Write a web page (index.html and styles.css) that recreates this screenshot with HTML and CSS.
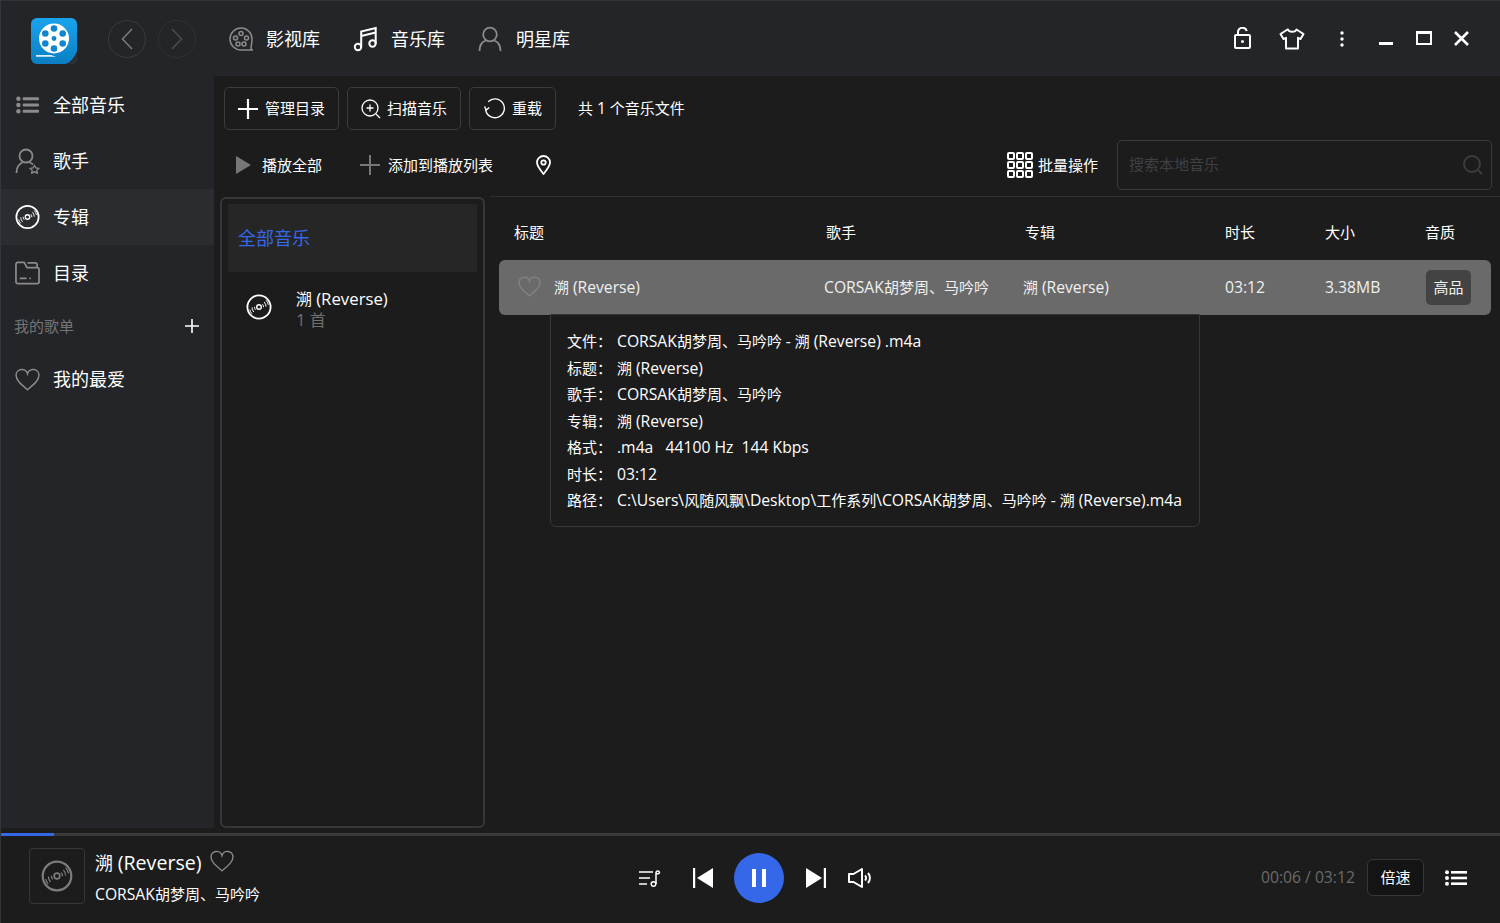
FILE: index.html
```html
<!DOCTYPE html>
<html lang="zh-CN">

<head>
    <meta charset="utf-8">
    <title>音乐库</title>
    <link rel="stylesheet" href="styles.css">
</head>

<body>
    <svg class="defs" width="0" height="0">
        <symbol id="disc" viewBox="0 0 26 26">
            <circle cx="13" cy="13" r="11.6" fill="none" stroke="currentColor" stroke-width="1.8" />
            <circle cx="13" cy="13" r="2.3" fill="none" stroke="currentColor" stroke-width="1.4" />
            <path d="M16.500 10.200a4.500 4.500 0 0 1 1 3M18.200 8a7.200 7.200 0 0 1 1.800 4.600M9.500 15.800a4.500 4.500 0 0 1-1-3M7.800 18a7.200 7.200 0 0 1-1.800-4.600M5.800 19.600a9.600 9.600 0 0 1-2-4M20 6.200a9.600 9.600 0 0 1 2.300 4.600" fill="none" stroke="currentColor" stroke-width="1" />
        </symbol>
        <symbol id="heart" viewBox="0 0 24 22">
            <path d="M12 20.800C5 15 1 11.500 1 7a5.600 5.600 0 0 1 11-1.500A5.600 5.600 0 0 1 23 7c0 4.500-4 8-11 13.800z" fill="none" stroke="currentColor" stroke-width="1.400" />
        </symbol>
    </svg>

    <div class="app">
        <header class="topbar">
            <svg class="logo" viewBox="0 0 46 46">
                <defs>
                    <linearGradient id="logoBlue" x1="0" y1="0" x2="0" y2="1">
                        <stop offset="0" stop-color="#1aa3ee" />
                        <stop offset="1" stop-color="#0a7fc2" />
                    </linearGradient>
                </defs>
                <rect width="46" height="46" rx="6" fill="url(#logoBlue)" />
                <circle cx="23" cy="20.500" r="15" fill="#fff" />
                <g fill="#0f86d2">
                    <circle cx="23" cy="20.500" r="2.400" />
                    <circle cx="23" cy="10.500" r="3.300" />
                    <circle cx="23" cy="30.500" r="3.300" />
                    <circle cx="14.300" cy="15.500" r="3.300" />
                    <circle cx="31.700" cy="15.500" r="3.300" />
                    <circle cx="14.300" cy="25.500" r="3.300" />
                    <circle cx="31.700" cy="25.500" r="3.300" />
                </g>
                <path d="M5 37h15l5 1.800H5z" fill="#dff2fc" />
                <path d="M46 33v7a6 6 0 0 1-6 6h-6c5-1 10-7 12-13z" fill="#2c2c2e" />
            </svg>
            <button class="round-btn back">
                <svg viewBox="0 0 12 22" class="chev"><path d="M11 1 1.500 11 11 21" /></svg>
            </button>
            <button class="round-btn forward">
                <svg viewBox="0 0 12 22" class="chev"><path d="M1 1l9.500 10L1 21" /></svg>
            </button>

            <nav class="top-nav">
                <a class="top-link">
                    <svg class="nav-icon" viewBox="0 0 26 26" fill="none" stroke="#8b8b8b" stroke-width="1.500">
                        <path d="M13 24a11 11 0 1 1 11-11c0 4-1 7-1 9.500 0 1 .5 1.500 2 1.500z" />
                        <circle cx="13" cy="7.500" r="2" />
                        <circle cx="7.500" cy="12" r="2" />
                        <circle cx="18.500" cy="12" r="2" />
                        <circle cx="10" cy="18" r="2" />
                        <circle cx="16" cy="18" r="2" />
                    </svg>
                    <span>影视库</span>
                </a>
                <a class="top-link">
                    <svg class="nav-icon" viewBox="0 0 26 26" fill="none" stroke="#fff" stroke-width="2">
                        <circle cx="5" cy="21" r="3.200" />
                        <circle cx="19.500" cy="17.500" r="3.200" />
                        <path d="M8.200 21V5.500L22.700 2v15.500M8.200 10l14.500-3.500" />
                    </svg>
                    <span>音乐库</span>
                </a>
                <a class="top-link star-link">
                    <svg class="nav-icon person" viewBox="0 0 24 26" fill="none" stroke="#8b8b8b" stroke-width="1.800">
                        <circle cx="12" cy="8.500" r="6.800" />
                        <path d="M1.500 25c0-6 3-9.500 6.500-10.500M22.500 25c0-6-3-9.500-6.500-10.500" />
                    </svg>
                    <span>明星库</span>
                </a>
            </nav>

            <div class="win-tools">
                <svg class="tool lock" viewBox="0 0 17 22" fill="none" stroke="#fff" stroke-width="2">
                    <rect x="1" y="8" width="15" height="13" rx="1" />
                    <path d="M4 8V5a4.500 4.500 0 0 1 8.800-1" />
                    <circle cx="8.500" cy="14.500" r="1.500" fill="#fff" stroke="none" />
                </svg>
                <svg class="tool shirt" viewBox="0 0 26 22" fill="none" stroke="#fff" stroke-width="2">
                    <path d="M8.500 1.500 1.500 6l3 5 2.500-1.200V20.500h12V9.800l2.500 1.200 3-5-7-4.500c-1 3-7.500 3-8.500 0z" stroke-linejoin="round" />
                </svg>
                <svg class="tool dots" viewBox="0 0 4 16" fill="#fff">
                    <circle cx="2" cy="2" r="1.700" />
                    <circle cx="2" cy="8" r="1.700" />
                    <circle cx="2" cy="14" r="1.700" />
                </svg>
                <span class="win-min"></span>
                <span class="win-max"></span>
                <svg class="tool close" viewBox="0 0 15 15" stroke="#fff" stroke-width="2.600">
                    <path d="M1 1l13 13M14 1 1 14" />
                </svg>
            </div>
        </header>

        <div class="main">
            <aside class="sidebar">
                <a class="side-item">
                    <svg class="side-icon list-icon" viewBox="0 0 24 18" fill="#8b8b8b">
                        <circle cx="2.500" cy="2.500" r="2.300" />
                        <circle cx="2.500" cy="9" r="2.300" />
                        <circle cx="2.500" cy="15.500" r="2.300" />
                        <rect x="7" y="1" width="17" height="3" rx="1" />
                        <rect x="7" y="7.500" width="17" height="3" rx="1" />
                        <rect x="7" y="14" width="17" height="3" rx="1" />
                    </svg>
                    <span>全部音乐</span>
                </a>
                <a class="side-item">
                    <svg class="side-icon" viewBox="0 0 24 26" fill="none" stroke="#8b8b8b" stroke-width="1.800">
                        <circle cx="10.500" cy="8" r="6.500" />
                        <path d="M1 25c0-6 2.500-9 6-10.500M14 14.500c1.500.5 2.500 1 3.500 2" />
                        <path d="M19 17.500l1.500 2.500 2.800.4-2 2 .5 2.800-2.800-1.400-2.800 1.400.5-2.800-2-2 2.800-.4z" stroke-width="1.300" />
                    </svg>
                    <span>歌手</span>
                </a>
                <a class="side-item active">
                    <svg class="side-icon disc-white"><use href="#disc" /></svg>
                    <span>专辑</span>
                </a>
                <a class="side-item">
                    <svg class="side-icon" viewBox="0 0 26 24" fill="none" stroke="#8b8b8b" stroke-width="1.800">
                        <path d="M1 3a2 2 0 0 1 2-2h6.500l3 5.500H23a2 2 0 0 1 2 2V21a2 2 0 0 1-2 2H3a2 2 0 0 1-2-2z" />
                        <path d="M13 1.500h8a2 2 0 0 1 2 2V6M5 17.500h7M15 17.500h1.500" />
                    </svg>
                    <span>目录</span>
                </a>
                <div class="side-group">
                    <span>我的歌单</span>
                    <svg class="group-add" viewBox="0 0 14 14" stroke="#fff" stroke-width="1.600"><path d="M7 0v14M0 7h14" /></svg>
                </div>
                <a class="side-item">
                    <svg class="side-icon heart-gray"><use href="#heart" /></svg>
                    <span>我的最爱</span>
                </a>
            </aside>

            <section class="content">
                <div class="actions">
                    <button class="outline-btn manage">
                        <svg class="btn-plus" viewBox="0 0 20 20" stroke="#fff" stroke-width="2.200"><path d="M10 0v20M0 10h20" /></svg>
                        <span>管理目录</span>
                    </button>
                    <button class="outline-btn scan">
                        <svg class="btn-icon" viewBox="0 0 20 20" fill="none" stroke="#fff" stroke-width="1.300">
                            <circle cx="9" cy="9" r="8" />
                            <path d="M9 5.500v7M5.500 9h7M15 15l4 4" />
                        </svg>
                        <span>扫描音乐</span>
                    </button>
                    <button class="outline-btn reload">
                        <svg class="reload-icon" viewBox="0 0 22 22" fill="none" stroke="#fff" stroke-width="1.300">
                            <path d="M5 4.500A9 9 0 1 1 2.500 12" />
                            <path d="M1.500 9 3 12.500 6 10" />
                        </svg>
                        <span>重载</span>
                    </button>
                    <span class="file-count">共 <span class="lat">1</span> 个音乐文件</span>
                </div>

                <div class="subactions">
                    <a class="sub-link play-all">
                        <svg class="sub-play" viewBox="0 0 15 18" fill="#777"><path d="M0 0l15 9-15 9z" /></svg>
                        <span>播放全部</span>
                    </a>
                    <a class="sub-link add-list">
                        <svg class="sub-plus" viewBox="0 0 20 20" stroke="#777" stroke-width="2"><path d="M10 0v20M0 10h20" /></svg>
                        <span>添加到播放列表</span>
                    </a>
                    <svg class="pin" viewBox="0 0 15 20" fill="none" stroke="#fff" stroke-width="1.800">
                        <path d="M7.500 19C3.500 14 1 11 1 7.500a6.500 6.500 0 0 1 13 0C14 11 11.500 14 7.500 19z" />
                        <circle cx="7.500" cy="7.500" r="2.200" />
                    </svg>
                    <a class="sub-link batch">
                        <svg class="batch-icon" viewBox="0 0 26 26" fill="none" stroke="#fff" stroke-width="2">
                            <rect x="1" y="1" width="6" height="6" rx="1" />
                            <rect x="10" y="1" width="6" height="6" rx="1" />
                            <rect x="19" y="1" width="6" height="6" rx="1" />
                            <rect x="1" y="10" width="6" height="6" rx="1" />
                            <rect x="10" y="10" width="6" height="6" rx="1" />
                            <rect x="19" y="10" width="6" height="6" rx="1" />
                            <rect x="1" y="19" width="6" height="6" rx="1" />
                            <rect x="10" y="19" width="6" height="6" rx="1" />
                            <rect x="19" y="19" width="6" height="6" rx="1" />
                        </svg>
                        <span>批量操作</span>
                    </a>
                    <div class="search">
                        <span>搜索本地音乐</span>
                        <svg class="search-icon" viewBox="0 0 20 20" fill="none" stroke="#3d3e42" stroke-width="1.800">
                            <circle cx="9" cy="9" r="8" />
                            <path d="M15.500 15.500 19 19" />
                        </svg>
                    </div>
                </div>

                <div class="panes">
                    <div class="album-pane">
                        <div class="album-all"><span>全部音乐</span></div>
                        <div class="album-row">
                            <svg class="album-disc"><use href="#disc" /></svg>
                            <div class="album-text">
                                <div class="album-name">溯 <span class="lat">(Reverse)</span></div>
                                <div class="album-count"><span class="lat">1</span> 首</div>
                            </div>
                        </div>
                    </div>

                    <div class="track-pane">
                        <div class="track-head">
                            <span>标题</span>
                            <span>歌手</span>
                            <span>专辑</span>
                            <span>时长</span>
                            <span>大小</span>
                            <span>音质</span>
                        </div>
                        <div class="track-row">
                            <span class="track-title">
                                <svg class="track-heart"><use href="#heart" /></svg>
                                <span>溯 <span class="lat">(Reverse)</span></span>
                            </span>
                            <span><span class="lat">CORSAK</span>胡梦周、马吟吟</span>
                            <span>溯 <span class="lat">(Reverse)</span></span>
                            <span class="lat">03:12</span>
                            <span class="lat">3.38MB</span>
                            <span class="quality">高品</span>
                        </div>

                        <dl class="file-tip">
                            <div><dt>文件：</dt><dd><span class="lat">CORSAK</span>胡梦周、马吟吟 <span class="lat">-</span> 溯 <span class="lat">(Reverse) .m4a</span></dd></div>
                            <div><dt>标题：</dt><dd>溯 <span class="lat">(Reverse)</span></dd></div>
                            <div><dt>歌手：</dt><dd><span class="lat">CORSAK</span>胡梦周、马吟吟</dd></div>
                            <div><dt>专辑：</dt><dd>溯 <span class="lat">(Reverse)</span></dd></div>
                            <div><dt>格式：</dt><dd class="lat">.m4a &nbsp; 44100 Hz &nbsp;144 Kbps</dd></div>
                            <div><dt>时长：</dt><dd class="lat">03:12</dd></div>
                            <div><dt>路径：</dt><dd><span class="lat">C:\Users\</span>风随风飘<span class="lat">\Desktop\</span>工作系列<span class="lat">\CORSAK</span>胡梦周、马吟吟 <span class="lat">-</span> 溯 <span class="lat">(Reverse).m4a</span></dd></div>
                        </dl>
                    </div>
                </div>
            </section>
        </div>

        <div class="progress"><div class="progress-fill"></div></div>

        <footer class="player">
            <div class="cover"><svg class="cover-disc"><use href="#disc" /></svg></div>
            <div class="now">
                <div class="now-title"><span>溯 <span class="lat">(Reverse)</span></span> <svg class="now-heart"><use href="#heart" /></svg></div>
                <div class="now-artist"><span class="lat">CORSAK</span>胡梦周、马吟吟</div>
            </div>
            <div class="controls">
                <svg class="queue" viewBox="0 0 22 17" fill="none" stroke="#fff" stroke-width="1.500">
                    <path d="M0 2h14M0 8h11M0 14h8" />
                    <circle cx="14.500" cy="14" r="2.300" />
                    <path d="M17 14V2.500a1.800 1.800 0 0 1 3.500 0c0 1-1 1.500-3.500 1.500" />
                </svg>
                <svg class="skip prev" viewBox="0 0 20 20" fill="#fff">
                    <rect width="2.200" height="20" />
                    <path d="M20 0v20L4 10z" />
                </svg>
                <button class="pause"><i></i><i></i></button>
                <svg class="skip next" viewBox="0 0 20 20" fill="#fff">
                    <rect x="17.800" width="2.200" height="20" />
                    <path d="M0 0v20l16-10z" />
                </svg>
                <svg class="volume" viewBox="0 0 23 20" fill="none" stroke="#fff" stroke-width="2">
                    <path d="M1 6v8h4.500L14 19V1L5.500 6z" stroke-linejoin="round" />
                    <path d="M17 7.500a3.500 3.500 0 0 1 0 5M20 5a7.500 7.500 0 0 1 0 10" />
                </svg>
            </div>
            <div class="time">00:06 / 03:12</div>
            <button class="speed">倍速</button>
            <svg class="playlist" viewBox="0 0 22 16" fill="#fff">
                <circle cx="2" cy="2.200" r="2" />
                <circle cx="2" cy="8" r="2" />
                <circle cx="2" cy="13.800" r="2" />
                <rect x="6" y="1" width="16" height="2.600" />
                <rect x="6" y="6.700" width="16" height="2.600" />
                <rect x="6" y="12.400" width="16" height="2.600" />
            </svg>
        </footer>
    </div>
</body>

</html>
```

FILE: styles.css
```css
* {
    box-sizing: border-box;
}

body {
    background: #1c1c1d;
    color: #fff;
    font-family: "Open Sans", "Noto Sans CJK SC", sans-serif;
    font-size: 15px;
    margin: 0;
    overflow: hidden;
}

button {
    color: inherit;
    font: inherit;
}

svg {
    flex: none;
}

/* latin runs are set a little larger than the cjk around them */
.lat {
    font-size: 1.047em;
}

.defs {
    position: absolute;
}

.app {
    border-left: 1px solid #30363a;
    display: flex;
    flex-direction: column;
    height: 923px;
    width: 1500px;
}

/* top bar */

.topbar {
    align-items: center;
    background: #242528;
    border-top: 1px solid #2f3437;
    display: flex;
    flex: none;
    height: 76px;
    padding-left: 30px;
}

.logo {
    height: 46px;
    margin-top: 4px;
    width: 46px;
}

.round-btn {
    align-items: center;
    background: none;
    border: 1px solid #3a3b3f;
    border-radius: 50%;
    display: flex;
    height: 38px;
    justify-content: center;
    padding: 0;
    width: 38px;
}

.back {
    margin-left: 31px;
}

.forward {
    border-color: #303135;
    margin-left: 12px;
}

.chev {
    fill: none;
    height: 22px;
    stroke: #7c7c7c;
    stroke-width: 1.500;
    width: 12px;
}

.forward .chev {
    stroke: #4c4c4c;
}

.top-nav {
    display: flex;
    margin-left: 32px;
}

.top-link {
    align-items: center;
    display: flex;
    font-size: 18px;
    gap: 12px;
    margin-right: 33px;
}

.top-link span {
    padding-bottom: 2px;
}

.star-link {
    gap: 14px;
}

.nav-icon {
    height: 26px;
    width: 26px;
}

.person {
    width: 24px;
}

.win-tools {
    align-items: center;
    display: flex;
    margin-left: auto;
}

.lock {
    height: 22px;
    margin-right: 28px;
    margin-top: -2px;
    width: 17px;
}

.shirt {
    height: 22px;
    margin-right: 35px;
    width: 26px;
}

.dots {
    height: 16px;
    margin-right: 35px;
    width: 4px;
}

.win-min {
    background: #fff;
    height: 3px;
    margin-right: 23px;
    margin-top: 9px;
    width: 14px;
}

.win-max {
    border: 2px solid #fff;
    border-top-width: 3px;
    height: 14px;
    margin-right: 22px;
    margin-top: -2px;
    width: 16px;
}

.close {
    height: 15px;
    margin-right: 31px;
    width: 15px;
}

/* sidebar */

.main {
    display: flex;
    flex: none;
    height: 752px;
}

.sidebar {
    background: #242528;
    flex: none;
    padding-top: 1px;
    width: 213px;
}

.side-item {
    align-items: center;
    display: flex;
    font-size: 18px;
    height: 56px;
    padding-left: 14px;
}

.side-item span {
    margin-left: 13px;
    padding-bottom: 2px;
}

.side-item.active {
    background: #2b2c2f;
}

.side-icon {
    height: 26px;
    width: 25px;
}

.list-icon {
    margin-left: 1px;
    margin-right: 1px;
    width: 23px;
}

.disc-white {
    color: #fff;
}

.heart-gray {
    color: #8b8b8b;
    height: 23px;
}

.side-group {
    align-items: center;
    color: #757575;
    display: flex;
    height: 50px;
    justify-content: space-between;
    padding: 0 15px 0 13px;
}

.side-group span {
    padding-bottom: 2px;
}

.group-add {
    height: 14px;
    width: 14px;
}

/* toolbars */

.content {
    display: flex;
    flex: 1;
    flex-direction: column;
    min-width: 0;
}

.actions {
    align-items: center;
    display: flex;
    gap: 8px;
    padding: 11px 0 0 10px;
}

.outline-btn {
    align-items: center;
    background: none;
    border: 1px solid #3a3b40;
    border-radius: 5px;
    display: flex;
    font-size: 15px;
    height: 43px;
    padding: 0;
    white-space: nowrap;
}

.outline-btn span {
    padding-bottom: 2px;
}

.manage {
    gap: 7px;
    padding-left: 13px;
    width: 115px;
}

.scan {
    gap: 6px;
    padding-left: 13px;
    width: 114px;
}

.reload {
    gap: 6px;
    padding-left: 13px;
    width: 87px;
}

.btn-plus {
    height: 20px;
    width: 20px;
}

.btn-icon {
    height: 20px;
    width: 20px;
}

.reload-icon {
    height: 23px;
    width: 23px;
}

.file-count {
    margin-left: 14px;
    padding-bottom: 2px;
}

.subactions {
    align-items: center;
    display: flex;
    height: 50px;
    margin-top: 10px;
}

.sub-link {
    align-items: center;
    display: flex;
    white-space: nowrap;
}

.sub-link span {
    padding-bottom: 2px;
}

.play-all {
    gap: 11px;
    margin-left: 22px;
}

.sub-play {
    height: 18px;
    width: 15px;
}

.add-list {
    gap: 8px;
    margin-left: 38px;
}

.sub-plus {
    height: 20px;
    width: 20px;
}

.pin {
    height: 20px;
    margin-left: 43px;
    width: 15px;
}

.batch {
    gap: 5px;
    margin-left: auto;
}

.batch-icon {
    height: 26px;
    width: 26px;
}

.search {
    align-items: center;
    border: 1px solid #3a3b40;
    border-radius: 5px;
    color: #3f4044;
    display: flex;
    height: 50px;
    justify-content: space-between;
    margin: 0 8px 0 19px;
    padding: 0 8px 0 11px;
    width: 375px;
}

.search span {
    padding-bottom: 3px;
}

.search-icon {
    height: 20px;
    width: 20px;
}

/* panes */

.panes {
    display: flex;
    flex: 1;
    margin-top: 6px;
    min-height: 0;
}

.album-pane {
    border: 2px solid #36373b;
    border-radius: 6px;
    flex: none;
    margin: 1px 0 0 6px;
    padding: 5px 6px;
    width: 265px;
}

.album-all {
    align-items: center;
    background: #262627;
    color: #3568e8;
    display: flex;
    font-size: 18px;
    height: 68px;
    padding-left: 10px;
}

.album-all span {
    padding-bottom: 2px;
}

.album-row {
    align-items: center;
    display: flex;
    gap: 24px;
    height: 70px;
    padding-left: 18px;
}

.album-disc {
    color: #fff;
    height: 26px;
    width: 26px;
}

.album-text {
    margin-top: 3px;
}

.album-name {
    font-size: 16px;
    line-height: 21px;
}

.album-count {
    color: #6f6f6f;
    font-size: 16px;
    line-height: 20px;
}

.track-pane {
    border-top: 1px solid #303135;
    flex: 1;
    margin-left: 5px;
    min-width: 0;
    position: relative;
}

.track-head {
    align-items: center;
    display: grid;
    grid-template-columns: 312px 199px 200px 100px 100px 1fr;
    height: 63px;
    padding: 6px 0 0 24px;
}

.track-row {
    align-items: center;
    background: #6a6a6a;
    border-radius: 6px;
    color: #f0f0f0;
    display: grid;
    grid-template-columns: 325px 199px 202px 100px 101px 1fr;
    height: 55px;
    margin: 0 9px;
}

.track-row > span {
    padding-bottom: 2px;
}

.track-title {
    align-items: center;
    display: flex;
    gap: 13px;
    padding-left: 19px;
}

.track-heart {
    color: #828282;
    height: 21px;
    width: 23px;
}

.track-row > .quality {
    align-items: center;
    background: #434343;
    border-radius: 5px;
    display: flex;
    height: 35px;
    justify-content: center;
    width: 45px;
}

.file-tip {
    background: #1c1c1d;
    border: 1px solid #36373b;
    border-radius: 0 0 6px 6px;
    left: 60px;
    margin: 0;
    padding: 13px 16px 12px 16px;
    position: absolute;
    top: 117px;
    width: 650px;
}

.file-tip div {
    display: flex;
    height: 26.500px;
    line-height: 26.500px;
    white-space: nowrap;
}

.file-tip dt {
    width: 50px;
}

.file-tip dd {
    margin: 0;
}

/* player */

.progress {
    background: #3a3a3a;
    flex: none;
    height: 3px;
    margin-top: 5px;
}

.progress-fill {
    background: #3568e8;
    height: 3px;
    width: 53px;
}

.player {
    align-items: center;
    display: flex;
    flex: 1;
    padding: 0 0 7px 28px;
}

.cover {
    align-items: center;
    border: 1px solid #36373b;
    border-radius: 4px;
    color: #7c7c7c;
    display: flex;
    height: 56px;
    justify-content: center;
    width: 56px;
}

.cover-disc {
    height: 32px;
    width: 32px;
}

.now {
    margin-left: 10px;
    margin-top: 7px;
    width: 300px;
}

.now-title {
    align-items: center;
    display: flex;
    font-size: 18px;
    gap: 8px;
    height: 30px;
    margin-top: -6px;
}

.now-title .lat {
    font-size: 1.09em;
}

.now-heart {
    color: #8b8b8b;
    height: 22px;
    margin-top: -2px;
    width: 24px;
}

.now-artist {
    line-height: 24px;
    margin-top: 5px;
}

.controls {
    align-items: center;
    display: flex;
    margin-left: 244px;
    margin-top: 4px;
}

.queue {
    height: 17px;
    width: 22px;
}

.skip {
    height: 20px;
    width: 20px;
}

.prev {
    margin-left: 32px;
}

.pause {
    align-items: center;
    background: #3568e8;
    border: 0;
    border-radius: 50%;
    display: flex;
    gap: 6px;
    height: 50px;
    justify-content: center;
    margin: 0 22px 0 21px;
    padding: 0;
    width: 50px;
}

.pause i {
    background: #fff;
    height: 18px;
    width: 4px;
}

.volume {
    height: 20px;
    margin-left: 22px;
    width: 23px;
}

.time {
    color: #6a6a6a;
    font-size: 15.700px;
    margin-left: 390px;
    margin-top: 2px;
    white-space: nowrap;
}

.speed {
    background: #141415;
    border: 1px solid #36373b;
    border-radius: 6px;
    height: 37px;
    margin-left: 12px;
    margin-top: 3px;
    padding: 0 0 2px;
    width: 57px;
}

.playlist {
    height: 16px;
    margin-left: 21px;
    margin-top: 3px;
    width: 22px;
}
```
